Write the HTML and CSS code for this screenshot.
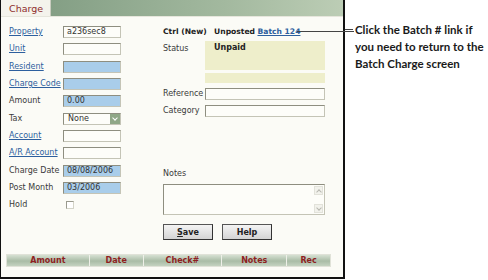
FILE: index.html
```html
<!DOCTYPE html>
<html lang="en">
<head>
	<meta charset="UTF-8"/>
	<title>Charge</title>
	<link rel="stylesheet" href="styles.css">
</head>
<body>
	<div class="page">
		<div class="frame">
			<div class="head">
				<div class="tab">Charge</div>
				<div class="bar"></div>
			</div>
			<div class="body">
				<div class="left">
					<a class="lbl link">Property</a><div class="inp">a236sec8</div>
					<a class="lbl link">Unit</a><div class="inp"></div>
					<a class="lbl link">Resident</a><div class="inp blue"></div>
					<a class="lbl link">Charge Code</a><div class="inp blue"></div>
					<span class="lbl">Amount</span><div class="inp blue">0.00</div>
					<span class="lbl">Tax</span><div class="inp sel">None<span class="drop"></span></div>
					<a class="lbl link">Account</a><div class="inp"></div>
					<a class="lbl link">A/R Account</a><div class="inp"></div>
					<span class="lbl">Charge Date</span><div class="inp blue">08/08/2006</div>
					<span class="lbl">Post Month</span><div class="inp blue">03/2006</div>
					<span class="lbl">Hold</span><div><span class="check"></span></div>
				</div>
				<div class="right">
					<div class="ctrl">
						<b>Ctrl (New)</b>
						<b class="unposted">Unposted</b>
						<a class="link batch">Batch 124</a>
						<span class="pointer"></span>
					</div>
					<div class="row">
						<span class="rlbl">Status</span>
						<div class="yellow big"><b>Unpaid</b></div>
					</div>
					<div class="row">
						<span class="rlbl"></span>
						<div class="yellow small"></div>
					</div>
					<div class="row">
						<span class="rlbl">Reference</span>
						<div class="inp wide"></div>
					</div>
					<div class="row">
						<span class="rlbl">Category</span>
						<div class="inp wide"></div>
					</div>
					<div class="notes-lbl">Notes</div>
					<div class="notes">
						<span class="scroll">
							<span class="arr up"></span>
							<span class="arr down"></span>
						</span>
					</div>
					<div class="buttons">
						<button class="btn"><u>S</u>ave</button>
						<button class="btn">Help</button>
					</div>
				</div>
			</div>
			<div class="grid-head">
				<div class="col" style="width:83px">Amount</div>
				<div class="col" style="width:54px">Date</div>
				<div class="col" style="width:79px">Check#</div>
				<div class="col" style="width:65px">Notes</div>
				<div class="col" style="width:43px">Rec</div>
			</div>
		</div>
		<div class="callout">Click the Batch # link if you need to return to the Batch Charge screen</div>
	</div>
</body>
</html>
```

FILE: styles.css
```css
* { margin: 0; padding: 0; box-sizing: border-box; }
body {
	background-color: #fff;
	font-family: "DejaVu Sans", Verdana, sans-serif;
	font-size: 8px;
	color: #3a3a3a;
}
.page {
	display: flex;
	flex-direction: row;
	align-items: flex-start;
	width: 488px;
	height: 280px;
}
.frame {
	position: relative;
	flex-shrink: 0;
	width: 345px;
	height: 279px;
	border: 2px solid #111;
	border-top: none;
	border-left-width: 1px;
	background-color: #fbfbf6;
}
.head {
	display: flex;
	height: 17px;
	border-bottom: 1px solid #e6e6dc;
}
.tab {
	width: 50px;
	background-color: #f4f3ec;
	color: #8e2b2b;
	font-size: 9.5px;
	padding: 3px 0 0 8px;
	border-right: 1px solid #c9ccbf;
}
.bar {
	flex: 1;
	background: linear-gradient(to right, #849f85, #a3b99f 60%, #bccdb5);
}
.body {
	display: flex;
	height: 237px;
}
.left {
	display: grid;
	grid-template-columns: 54px 58px;
	grid-auto-rows: 12px;
	row-gap: 5.33px;
	padding: 9px 0 0 8px;
	width: 162px;
	align-items: center;
}
.lbl {
	line-height: 12px;
	white-space: nowrap;
}
.link {
	color: #2d5f9e;
	text-decoration: underline;
}
.inp {
	height: 12px;
	border: 1px solid #c4c4b6;
	border-top-color: #8e8e80;
	border-left-color: #8e8e80;
	background-color: #fdfdf9;
	color: #333;
	line-height: 10px;
	padding-left: 3px;
	position: relative;
}
.blue {
	background-color: #a9cdea;
}
.sel {
	padding-left: 4px;
}
.drop {
	position: absolute;
	right: 0;
	top: 0;
	width: 10px;
	height: 10px;
	background-color: #8fa787;
}
.drop::after {
	content: "";
	position: absolute;
	left: 3px;
	top: 2px;
	width: 3px;
	height: 3px;
	border-right: 1px solid #fff;
	border-bottom: 1px solid #fff;
	transform: rotate(45deg);
}
.check {
	display: block;
	width: 8px;
	height: 8px;
	margin-left: 3px;
	border: 1px solid #d4d4c8;
	border-top-color: #9a9a8e;
	border-left-color: #9a9a8e;
	background-color: #fff;
}
.right {
	width: 165px;
	padding-top: 9px;
	position: relative;
}
.ctrl {
	height: 12px;
	line-height: 12px;
	font-size: 7.6px;
	color: #222;
	white-space: nowrap;
	position: relative;
}
.unposted {
	margin-left: 5px;
}
.batch {
	font-weight: bold;
}
.pointer {
	position: absolute;
	left: 134px;
	top: 5px;
	width: 57px;
	height: 1px;
	background-color: #444;
}
.row {
	display: flex;
	margin-top: 5px;
}
.rlbl {
	width: 42px;
	line-height: 12px;
}
.yellow {
	width: 120px;
	background-color: #eeeecb;
	padding: 2px 0 0 9px;
	color: #222;
}
.big {
	height: 29px;
	margin-top: -2px;
}
.small {
	height: 10px;
	margin-top: -2px;
}
.wide {
	width: 120px;
}
.notes-lbl {
	margin-top: 51px;
	line-height: 12px;
}
.notes {
	position: relative;
	width: 162px;
	height: 31px;
	margin-top: 4px;
	border: 1px solid #c4c4b6;
	border-top-color: #8e8e80;
	border-left-color: #8e8e80;
	background-color: #fdfdf9;
}
.scroll {
	position: absolute;
	right: 1px;
	top: 1px;
	bottom: 1px;
	width: 9px;
	display: flex;
	flex-direction: column;
	justify-content: space-between;
}
.arr {
	display: block;
	width: 9px;
	height: 9px;
	background-color: #f2f2ec;
	border: 1px solid #e2e2da;
	position: relative;
}
.arr::after {
	content: "";
	position: absolute;
	left: 2px;
	width: 3px;
	height: 3px;
	border-left: 1px solid #b8b8b0;
	border-top: 1px solid #b8b8b0;
}
.up::after {
	top: 3px;
	transform: rotate(45deg);
}
.down::after {
	top: 1px;
	transform: rotate(225deg);
}
.buttons {
	display: flex;
	gap: 9px;
	margin-top: 9px;
}
.btn {
	width: 50px;
	height: 16px;
	border: 1px solid #555;
	border-right-color: #333;
	border-bottom-color: #333;
	background: linear-gradient(#f4f4f4, #d4d4d4);
	font-family: "DejaVu Sans", Verdana, sans-serif;
	font-size: 8px;
	font-weight: bold;
	color: #222;
}
.grid-head {
	display: flex;
	margin: 0 0 0 5px;
	width: 325px;
	height: 13px;
	border: 1px solid #e0e2d8;
}
.col {
	text-align: center;
	line-height: 11px;
	font-weight: bold;
	color: #8e1f1f;
	background: linear-gradient(#d6e0d2, #a9bca6 55%, #c4d2c0);
	border-right: 1px solid #eef0e8;
}
.col:last-child {
	border-right: none;
}
.callout {
	flex-shrink: 0;
	margin: 21px 0 0 10px;
	width: 133px;
	font-family: Lato, "Noto Sans", sans-serif;
	font-weight: 700;
	font-size: 11.5px;
	line-height: 17px;
	color: #1a1a1a;
	position: relative;
}
.callout::before {
	content: "";
	position: absolute;
	left: -10px;
	top: 8px;
	width: 8px;
	height: 1px;
	background-color: #444;
}
```
